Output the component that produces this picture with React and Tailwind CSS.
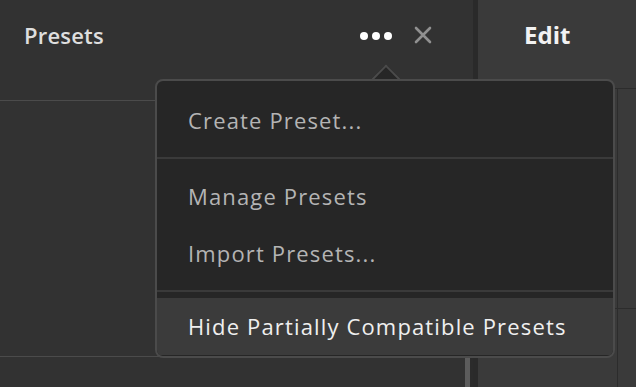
import React from "react"

const MenuItem = ({ label, active = false }) => (
  <div
    className={`h-[57px] flex items-center pl-[31px] text-[22px] tracking-[1.15px] ${
      active ? "bg-[#3b3b3b] text-[#efefef]" : "text-[#b4b4b4]"
    }`}
  >
    {label}
  </div>
)

const Separator = () => <div className="h-[2px] bg-[#3a3a3a]" />

const App = () => {
  return (
    <div
      className="relative w-[636px] h-[387px] overflow-hidden bg-[#323232] flex"
      style={{ fontFamily: "'Open Sans', 'Noto Sans', sans-serif" }}
    >
      {/* left panel */}
      <div className="w-[473px] flex flex-col">
        <div className="h-[101px] flex items-start justify-between border-b border-[#4b4b4b]">
          <div className="mt-[19px] ml-[24px] text-[22px] tracking-[0.2px] font-semibold text-[#dedede]">Presets</div>
          <div className="mt-[26px] mr-[41px] flex items-center gap-[22px]">
            <div className="flex gap-[4px] mt-[2px]">
              <span className="w-[8px] h-[8px] rounded-full bg-white" />
              <span className="w-[8px] h-[8px] rounded-full bg-white" />
              <span className="w-[8px] h-[8px] rounded-full bg-white" />
            </div>
            <svg width="18" height="18" viewBox="0 0 18 18">
              <path d="M2 2 L16 16 M16 2 L2 16" stroke="#909090" strokeWidth="2.6" strokeLinecap="round" />
            </svg>
          </div>
        </div>
        <div className="h-[256px] border-b border-[#4b4b4b]" />
        <div className="flex-1 flex justify-end">
          <div className="w-[5px] bg-[#5c5c5c]" />
          <div className="w-[3px] bg-[#2b2b2b]" />
        </div>
      </div>

      {/* divider */}
      <div className="w-[5px] bg-[#2a2a2a]" />

      {/* right panel */}
      <div className="flex-1 flex flex-col bg-[#3a3a3a]">
        <div className="h-[89px] border-b border-[#2c2c2c]">
          <div className="mt-[17px] ml-[46px] text-[24px] font-bold text-[#f2f2f2]">Edit</div>
        </div>
        <div className="h-[220px] border-b border-[#2c2c2c] flex justify-end">
          <div className="w-[19px] border-l border-[#2c2c2c]" />
        </div>
        <div className="flex-1 flex justify-end">
          <div className="w-[19px] border-l border-[#2c2c2c]" />
        </div>
      </div>

      {/* popup arrow */}
      <div className="absolute left-[375px] top-[69px] w-[22px] h-[22px] rotate-45 bg-[#262626] border-l-2 border-t-2 border-[#4b4b4b]" />

      {/* popup menu */}
      <div className="absolute left-[155px] top-[79px] w-[460px] h-[279px] rounded-[8px] border-2 border-[#4b4b4b] bg-[#262626] overflow-hidden">
        <div className="pt-[11px] pb-[8px]">
          <MenuItem label="Create Preset..." />
        </div>
        <Separator />
        <div className="pt-[9px] pb-[8px]">
          <MenuItem label="Manage Presets" />
          <MenuItem label="Import Presets..." />
        </div>
        <Separator />
        <div className="pt-[6px]">
          <MenuItem label="Hide Partially Compatible Presets" active />
        </div>
      </div>
    </div>
  )
}

export default App
